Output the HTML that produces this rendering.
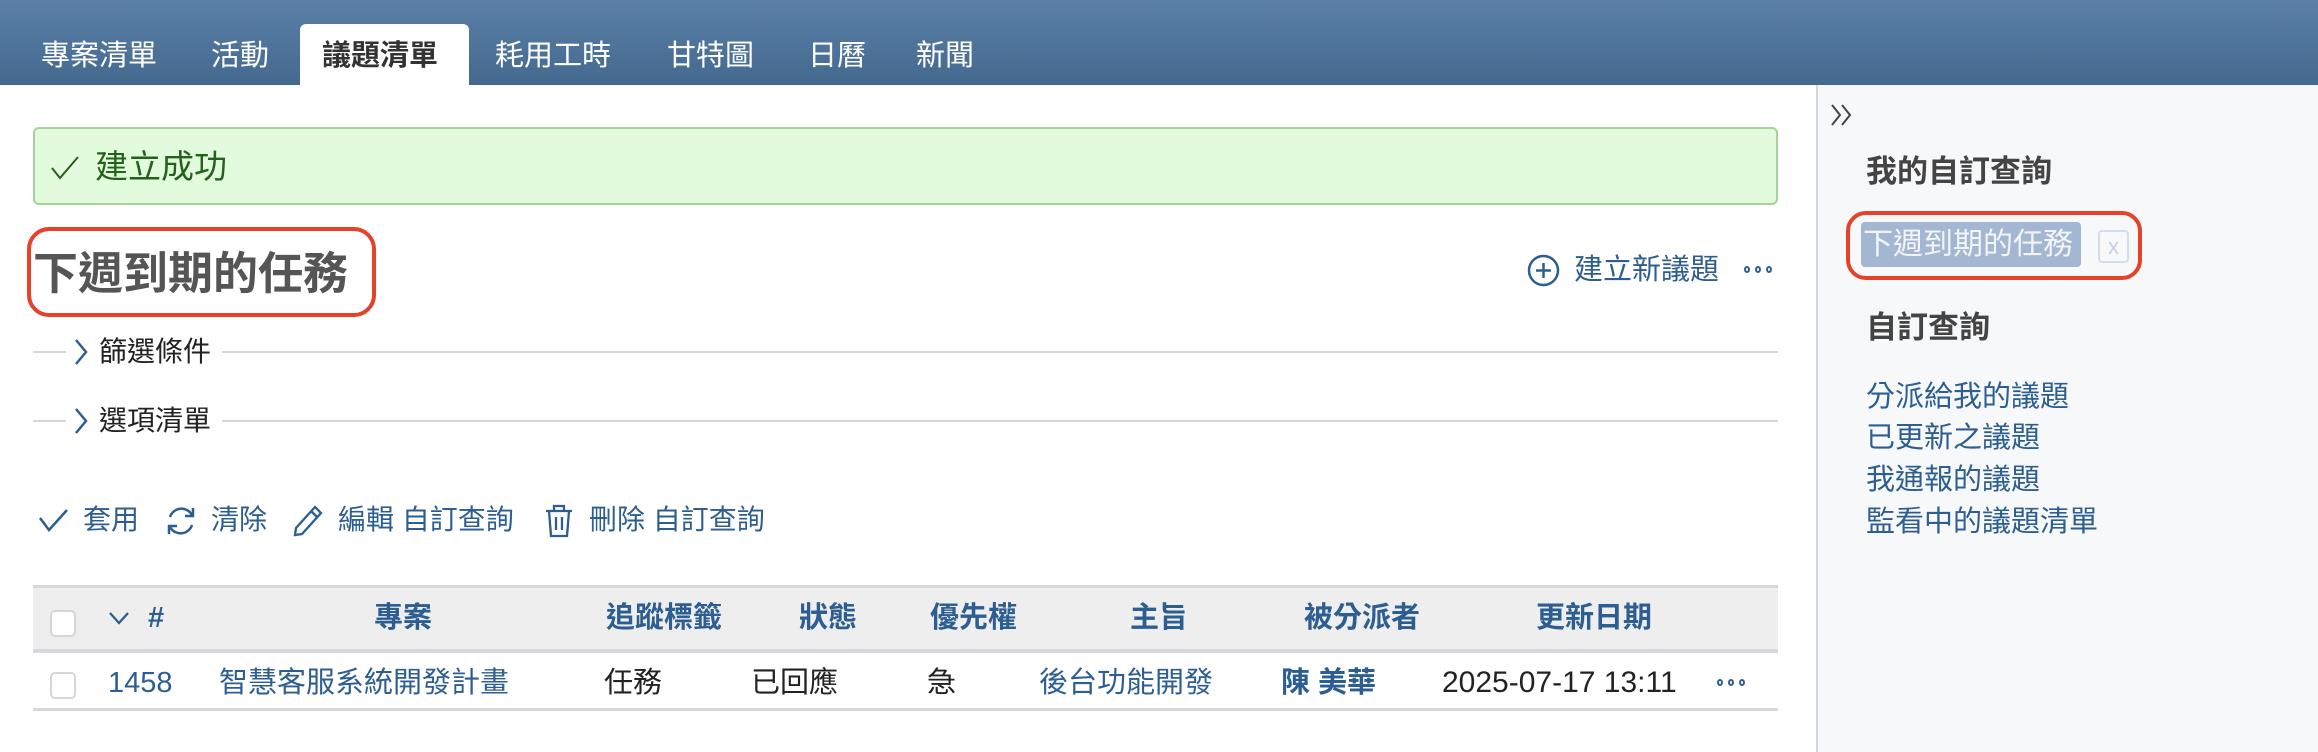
<!DOCTYPE html>
<html><head><meta charset="utf-8">
<style>
*{margin:0;padding:0;box-sizing:border-box}
body{width:2318px;height:752px;position:relative;overflow:hidden;background:#fff;font-family:"Liberation Sans","Noto Sans CJK TC",sans-serif;font-size:29px;color:#333}
.a{position:absolute;white-space:nowrap}
.hdr{position:absolute;left:0;top:0;width:2318px;height:85px;background:linear-gradient(#5b80a7,#44698f)}
.tab{position:absolute;top:36px;height:40px;line-height:40px;color:#fff;font-size:29px}
.act{position:absolute;left:300px;top:24px;width:169px;height:61px;background:#fff;border-radius:6px 6px 0 0}
.blue{color:#2d5e91}
.side{position:absolute;left:1816px;top:85px;width:502px;height:667px;background:#f7f8fa;border-left:2px solid #d3d7dc}
.line{position:absolute;height:2px;background:#d3d7dc}
.cb{position:absolute;width:26px;height:27px;border:2px solid #d6d6d6;border-radius:5px;background:#fff}
.dots{position:absolute;display:flex;gap:5px}
.dots i{display:block;width:6px;height:7px;border:2px solid #2d5e91;border-radius:50%}
</style></head><body>
<div class="hdr"></div>
<div class="act"></div>
<div class="tab" style="left:41px">專案清單</div>
<div class="tab" style="left:211px">活動</div>
<div class="tab" style="left:322px;color:#333;font-weight:bold">議題清單</div>
<div class="tab" style="left:495px">耗用工時</div>
<div class="tab" style="left:667px">甘特圖</div>
<div class="tab" style="left:808px">日曆</div>
<div class="tab" style="left:916px">新聞</div>

<div class="a" style="left:33px;top:127px;width:1745px;height:78px;background:#e2fbdd;border:2px solid #a6d19b;border-radius:6px"></div>
<svg class="a" style="left:50px;top:155px" width="30" height="26" viewBox="0 0 30 26"><path d="M2 13 L10 23 L28 2" fill="none" stroke="#2a5f1e" stroke-width="2"/></svg>
<div class="a" style="left:95px;top:146px;line-height:42px;font-size:33px;color:#23621a">建立成功</div>

<div class="a" style="left:27px;top:227px;width:349px;height:90px;border:4px solid #e6412a;border-radius:22px"></div>
<div class="a" style="left:33px;top:245px;line-height:58px;font-size:45px;font-weight:bold;color:#555">下週到期的任務</div>

<svg class="a" style="left:1527px;top:254px" width="33" height="33" viewBox="0 0 33 33"><circle cx="16.5" cy="16.5" r="14.5" fill="none" stroke="#2d5e91" stroke-width="2.5"/><path d="M16.5 9v15M9 16.5h15" stroke="#2d5e91" stroke-width="2.5"/></svg>
<div class="a blue" style="left:1574px;top:250px;line-height:40px;font-size:29px">建立新議題</div>
<div class="dots" style="left:1744px;top:266px"><i></i><i></i><i></i></div>

<div class="line" style="left:33px;top:351px;width:33px"></div>
<svg class="a" style="left:74px;top:338px" width="14" height="28" viewBox="0 0 14 28"><path d="M2 2 L12 14 L2 26" fill="none" stroke="#2d5e91" stroke-width="2.5"/></svg>
<div class="a" style="left:99px;top:332px;line-height:40px;font-size:28px;color:#222">篩選條件</div>
<div class="line" style="left:222px;top:351px;width:1556px"></div>

<div class="line" style="left:33px;top:420px;width:33px"></div>
<svg class="a" style="left:74px;top:407px" width="14" height="28" viewBox="0 0 14 28"><path d="M2 2 L12 14 L2 26" fill="none" stroke="#2d5e91" stroke-width="2.5"/></svg>
<div class="a" style="left:99px;top:401px;line-height:40px;font-size:28px;color:#222">選項清單</div>
<div class="line" style="left:222px;top:420px;width:1556px"></div>

<svg class="a" style="left:38px;top:508px" width="31" height="24" viewBox="0 0 31 24"><path d="M2 10 L11 22 L29 2" fill="none" stroke="#2d5e91" stroke-width="2.5"/></svg>
<div class="a blue" style="left:83px;top:500px;line-height:40px;font-size:28px">套用</div>
<svg class="a" style="left:164px;top:505px" width="34" height="32" viewBox="0 0 34 32"><path d="M6 12 A12 12 0 0 1 28 10 M28 20 A12 12 0 0 1 6 22" fill="none" stroke="#2d5e91" stroke-width="2.5"/><path d="M29 3 v8 h-8 M5 29 v-8 h8" fill="none" stroke="#2d5e91" stroke-width="2.5"/></svg>
<div class="a blue" style="left:211px;top:500px;line-height:40px;font-size:28px">清除</div>
<svg class="a" style="left:293px;top:504px" width="31" height="33" viewBox="0 0 31 33"><path d="M22 3 L28 9 L9 30 L2 31 L3 24 Z M18 7 L24 13" fill="none" stroke="#2d5e91" stroke-width="2.3"/></svg>
<div class="a blue" style="left:338px;top:500px;line-height:40px;font-size:28px">編輯 自訂查詢</div>
<svg class="a" style="left:544px;top:503px" width="30" height="35" viewBox="0 0 30 35"><path d="M2 8h26M10 8V3h10v5M5 8l2 25h16l2-25M12 14v13M18 14v13" fill="none" stroke="#2d5e91" stroke-width="2.3"/></svg>
<div class="a blue" style="left:589px;top:500px;line-height:40px;font-size:28px">刪除 自訂查詢</div>

<div class="a" style="left:33px;top:585px;width:1745px;height:68px;background:#eeeeee;border-top:3px solid #d5d9de;border-bottom:4px solid #d5d9de"></div>
<div class="cb" style="left:50px;top:610px"></div>
<svg class="a" style="left:108px;top:611px" width="22" height="14" viewBox="0 0 22 14"><path d="M2 2 L11 12 L20 2" fill="none" stroke="#2d5e91" stroke-width="2.3"/></svg>
<div class="a blue" style="left:148px;top:598px;line-height:40px;font-weight:bold">#</div>
<div class="a blue" style="left:374px;top:598px;line-height:40px;font-weight:bold">專案</div>
<div class="a blue" style="left:606px;top:598px;line-height:40px;font-weight:bold">追蹤標籤</div>
<div class="a blue" style="left:799px;top:598px;line-height:40px;font-weight:bold">狀態</div>
<div class="a blue" style="left:930px;top:598px;line-height:40px;font-weight:bold">優先權</div>
<div class="a blue" style="left:1130px;top:598px;line-height:40px;font-weight:bold">主旨</div>
<div class="a blue" style="left:1304px;top:598px;line-height:40px;font-weight:bold">被分派者</div>
<div class="a blue" style="left:1536px;top:598px;line-height:40px;font-weight:bold">更新日期</div>

<div class="cb" style="left:50px;top:672px"></div>
<div class="a blue" style="left:108px;top:663px;line-height:40px">1458</div>
<div class="a blue" style="left:219px;top:663px;line-height:40px">智慧客服系統開發計畫</div>
<div class="a" style="left:604px;top:663px;line-height:40px;color:#222">任務</div>
<div class="a" style="left:751px;top:663px;line-height:40px;color:#222">已回應</div>
<div class="a" style="left:927px;top:663px;line-height:40px;color:#222">急</div>
<div class="a blue" style="left:1039px;top:663px;line-height:40px">後台功能開發</div>
<div class="a blue" style="left:1281px;top:663px;line-height:40px;font-weight:bold">陳 美華</div>
<div class="a" style="left:1442px;top:663px;line-height:40px;color:#222;font-size:30px">2025-07-17 13:11</div>
<div class="dots" style="left:1717px;top:679px"><i></i><i></i><i></i></div>
<div class="a" style="left:33px;top:708px;width:1745px;height:3px;background:#d5d9de"></div>

<div class="side"></div>
<svg class="a" style="left:1830px;top:103px" width="24" height="24" viewBox="0 0 24 24"><path d="M2 2 L10 12 L2 22 M12 2 L20 12 L12 22" fill="none" stroke="#444" stroke-width="2"/></svg>
<div class="a" style="left:1866px;top:152px;line-height:40px;font-size:31px;font-weight:bold;color:#444">我的自訂查詢</div>
<div class="a" style="left:1846px;top:211px;width:296px;height:69px;border:4px solid #e6412a;border-radius:20px"></div>
<div class="a" style="left:1861px;top:222px;width:220px;height:45px;background:#a3b7d2;border-radius:4px"></div>
<div class="a" style="left:1863px;top:224px;line-height:41px;font-size:30px;color:#f2f5fa">下週到期的任務</div>
<div class="a" style="left:2098px;top:230px;width:31px;height:33px;border:2px solid #d3ddea;border-radius:4px;color:#c6d2e2;font-size:22px;line-height:29px;text-align:center">x</div>
<div class="a" style="left:1866px;top:308px;line-height:40px;font-size:31px;font-weight:bold;color:#444">自訂查詢</div>
<div class="a blue" style="left:1866px;top:377px;line-height:40px">分派給我的議題</div>
<div class="a blue" style="left:1866px;top:418px;line-height:40px">已更新之議題</div>
<div class="a blue" style="left:1866px;top:460px;line-height:40px">我通報的議題</div>
<div class="a blue" style="left:1866px;top:502px;line-height:40px">監看中的議題清單</div>
</body></html>
